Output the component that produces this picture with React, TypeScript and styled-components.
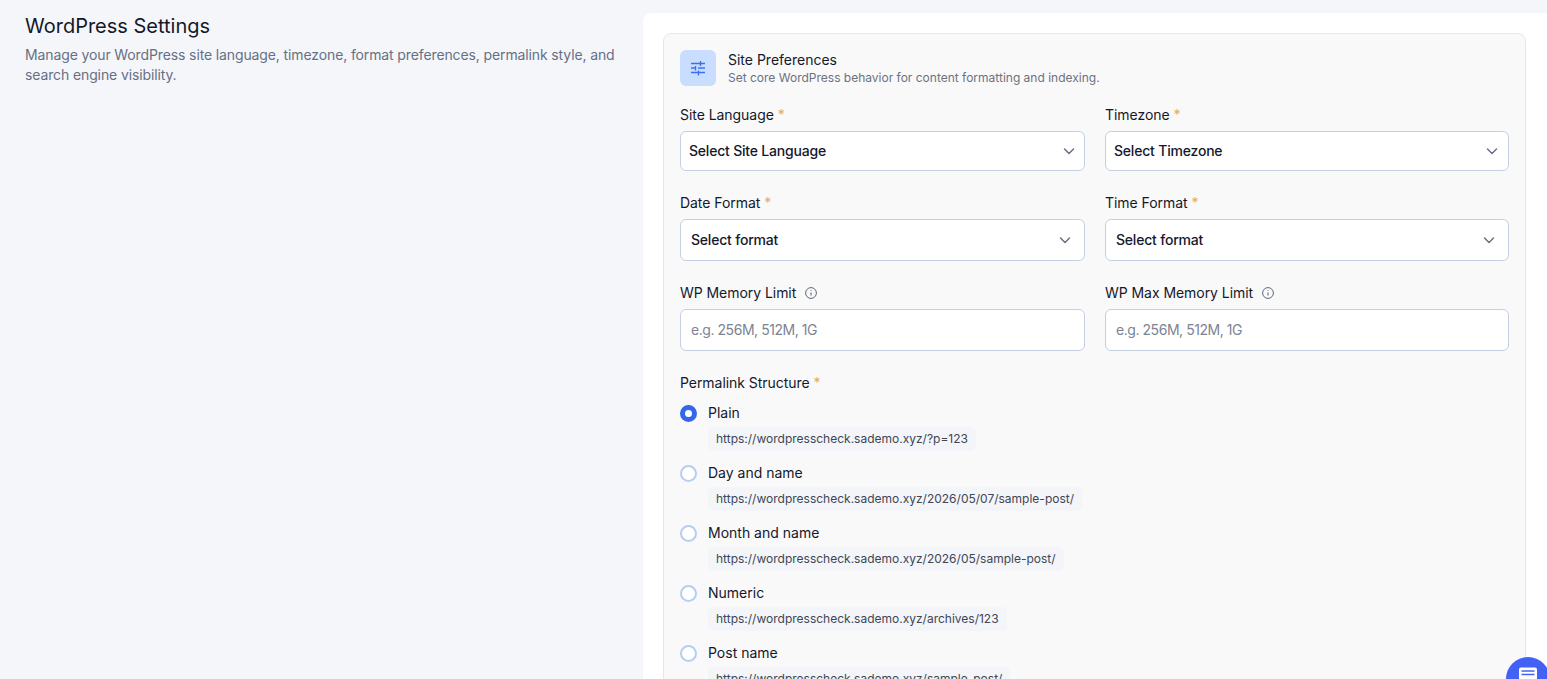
import React from "react";
import styled, { createGlobalStyle } from "styled-components";

const GlobalStyle = createGlobalStyle`
  html, body {
    margin: 0;
    height: 679px;
    overflow: hidden;
    background: #f5f6fa;
    font-family: "Inter", "Noto Sans", sans-serif;
  }
  * { box-sizing: border-box; }
`;

const permalinks = [
  { label: "Plain", url: "https://wordpresscheck.sademo.xyz/?p=123", checked: true },
  { label: "Day and name", url: "https://wordpresscheck.sademo.xyz/2026/05/07/sample-post/" },
  { label: "Month and name", url: "https://wordpresscheck.sademo.xyz/2026/05/sample-post/" },
  { label: "Numeric", url: "https://wordpresscheck.sademo.xyz/archives/123" },
  { label: "Post name", url: "https://wordpresscheck.sademo.xyz/sample-post/" }
];

const Chevron = () => (
  <svg width="16" height="16" viewBox="0 0 16 16" fill="none">
    <path d="M3.5 6l4.5 4.5L12.5 6" stroke="#6b7083" strokeWidth="1.5" strokeLinecap="round" strokeLinejoin="round" />
  </svg>
);

const InfoIcon = () => (
  <svg width="14" height="14" viewBox="0 0 14 14" fill="none">
    <circle cx="7" cy="7" r="5.4" stroke="#5f6779" strokeWidth="1" />
    <path d="M7 6.4v3.2M7 4.2v.8" stroke="#5f6779" strokeWidth="1.1" />
  </svg>
);

const TuneIcon = () => (
  <svg width="16" height="16" viewBox="0 0 16 16" fill="none">
    <path
      d="M1 3.5h14M10.5 1v5M1 8h4.5M5.5 6v4.5M8 8h7M1 12.5h14M8.5 10.5v5"
      stroke="#3f6ff0"
      strokeWidth="1.4"
    />
  </svg>
);

const ChatIcon = () => (
  <svg width="20" height="20" viewBox="0 0 20 20" fill="none">
    <rect x="1" y="1.5" width="18" height="15" rx="2" fill="#fff" />
    <path d="M3.5 5h13M3.5 8.5h13" stroke="#4361f5" strokeWidth="1.5" />
  </svg>
);

export default function App() {
  return (
    <>
      <GlobalStyle />
      <Page>
        <Intro>
          <Title>WordPress Settings</Title>
          <Description>
            Manage your WordPress site language, timezone, format preferences, permalink style, and
            search engine visibility.
          </Description>
        </Intro>
        <Card>
          <Panel>
            <PanelHeader>
              <IconTile>
                <TuneIcon />
              </IconTile>
              <div>
                <PanelTitle>Site Preferences</PanelTitle>
                <PanelSubtitle>Set core WordPress behavior for content formatting and indexing.</PanelSubtitle>
              </div>
            </PanelHeader>
            <FieldGrid>
              <Field>
                <Label>
                  Site Language <Required>*</Required>
                </Label>
                <Control $height={40} $inset={8} $chevronInset={7}>
                  <ControlText>Select Site Language</ControlText>
                  <Chevron />
                </Control>
              </Field>
              <Field>
                <Label>
                  Timezone <Required>*</Required>
                </Label>
                <Control $height={40} $inset={8} $chevronInset={8}>
                  <ControlText>Select Timezone</ControlText>
                  <Chevron />
                </Control>
              </Field>
              <Field>
                <Label>
                  Date Format <Required>*</Required>
                </Label>
                <Control $height={42} $inset={10} $chevronInset={11}>
                  <ControlText>Select format</ControlText>
                  <Chevron />
                </Control>
              </Field>
              <Field>
                <Label>
                  Time Format <Required>*</Required>
                </Label>
                <Control $height={42} $inset={10} $chevronInset={11}>
                  <ControlText>Select format</ControlText>
                  <Chevron />
                </Control>
              </Field>
              <Field>
                <Label>
                  WP Memory Limit
                  <InfoSlot>
                    <InfoIcon />
                  </InfoSlot>
                </Label>
                <Control $height={42} $inset={10} $chevronInset={11}>
                  <Placeholder>e.g. 256M, 512M, 1G</Placeholder>
                </Control>
              </Field>
              <Field>
                <Label>
                  WP Max Memory Limit
                  <InfoSlot>
                    <InfoIcon />
                  </InfoSlot>
                </Label>
                <Control $height={42} $inset={10} $chevronInset={11}>
                  <Placeholder>e.g. 256M, 512M, 1G</Placeholder>
                </Control>
              </Field>
            </FieldGrid>
            <Permalinks>
              <Label>
                Permalink Structure <Required>*</Required>
              </Label>
              <RadioList>
                {permalinks.map(item => (
                  <RadioItem key={item.label}>
                    <RadioRow>
                      <Radio $checked={item.checked} />
                      <RadioLabel>{item.label}</RadioLabel>
                    </RadioRow>
                    <UrlChip>{item.url}</UrlChip>
                  </RadioItem>
                ))}
              </RadioList>
            </Permalinks>
          </Panel>
        </Card>
      </Page>
      <ChatButton>
        <ChatIcon />
      </ChatButton>
    </>
  );
}

const Page = styled.div`
  display: flex;
  height: 679px;
  overflow: hidden;
  padding-top: 13px;
`;

const Intro = styled.div`
  width: 643px;
  flex: none;
  padding: 0 20px 0 25px;
`;

const Title = styled.h1`
  margin: 0 0 6px;
  font-size: 20px;
  line-height: 26px;
  font-weight: 400;
  color: #14182b;
`;

const Description = styled.p`
  margin: 0;
  font-size: 14px;
  line-height: 20px;
  letter-spacing: -0.12px;
  color: #667085;
`;

const Card = styled.div`
  flex: 1;
  background: #fff;
  border-radius: 8px 0 0 0;
  padding: 20px 21px 0 20px;
`;

const Panel = styled.div`
  background: #f9f9fa;
  border: 1px solid #e5e7eb;
  border-radius: 8px;
  padding: 16px 16px 0;
  height: 800px;
`;

const PanelHeader = styled.div`
  display: flex;
  align-items: center;
  gap: 12px;
  margin-bottom: 19px;
`;

const IconTile = styled.div`
  width: 36px;
  height: 36px;
  border-radius: 6px;
  background: #c9defe;
  display: flex;
  align-items: center;
  justify-content: center;
`;

const PanelTitle = styled.div`
  font-size: 14px;
  line-height: 20px;
  font-weight: 400;
  color: #14182b;
`;

const PanelSubtitle = styled.div`
  font-size: 12px;
  line-height: 16px;
  color: #6b7280;
`;

const FieldGrid = styled.div`
  display: grid;
  grid-template-columns: 405px 404px;
  column-gap: 20px;
  row-gap: 22px;
`;

const Field = styled.div`
  display: flex;
  flex-direction: column;
  gap: 6px;
`;

const Label = styled.div`
  font-size: 14px;
  line-height: 20px;
  font-weight: 400;
  letter-spacing: -0.05px;
  color: #14182b;
  display: flex;
  align-items: center;
  gap: 4px;
`;

const Required = styled.span`
  color: #e5a86a;
`;

const InfoSlot = styled.span`
  display: inline-flex;
  margin-left: 4px;
`;

const Control = styled.div<{ $height: number; $inset: number; $chevronInset: number }>`
  height: ${p => p.$height}px;
  background: #fff;
  border: 1px solid #c5d0e2;
  border-radius: 6px;
  display: flex;
  align-items: center;
  justify-content: space-between;
  padding: 0 ${p => p.$chevronInset}px 0 ${p => p.$inset}px;
  font-size: 14px;
  color: #14182b;
`;

const ControlText = styled.span`
  font-weight: 500;
  letter-spacing: -0.2px;
  margin-top: -1px;
`;

const Placeholder = styled.span`
  font-weight: 400;
  letter-spacing: -0.45px;
  margin-top: -2px;
  color: #7c8493;
`;

const Permalinks = styled.div`
  margin-top: 22px;
`;

const RadioList = styled.div`
  margin-top: 10px;
  display: flex;
  flex-direction: column;
  gap: 12px;
`;

const RadioItem = styled.div`
  display: flex;
  flex-direction: column;
  align-items: flex-start;
  gap: 4px;
`;

const RadioRow = styled.div`
  display: flex;
  align-items: center;
  gap: 11px;
  height: 20px;
`;

const Radio = styled.span<{ $checked?: boolean }>`
  width: 17px;
  height: 17px;
  border-radius: 50%;
  border: ${p => (p.$checked ? "5.5px solid #3366e8" : "2px solid #b8cdf0")};
  background: #fff;
`;

const RadioLabel = styled.span`
  font-size: 14px;
  margin-top: -2px;
  color: #14182b;
`;

const UrlChip = styled.code`
  margin-left: 28px;
  height: 24px;
  padding: 0 8px 1px;
  display: flex;
  align-items: center;
  border-radius: 5px;
  background: #f3f5f9;
  font-family: inherit;
  font-size: 12px;
  color: #3f4654;
`;

const ChatButton = styled.div`
  position: fixed;
  left: 1506px;
  top: 657px;
  width: 44px;
  height: 44px;
  border-radius: 50%;
  background: #4361f5;
  display: flex;
  justify-content: center;
  padding-top: 9px;
`;
